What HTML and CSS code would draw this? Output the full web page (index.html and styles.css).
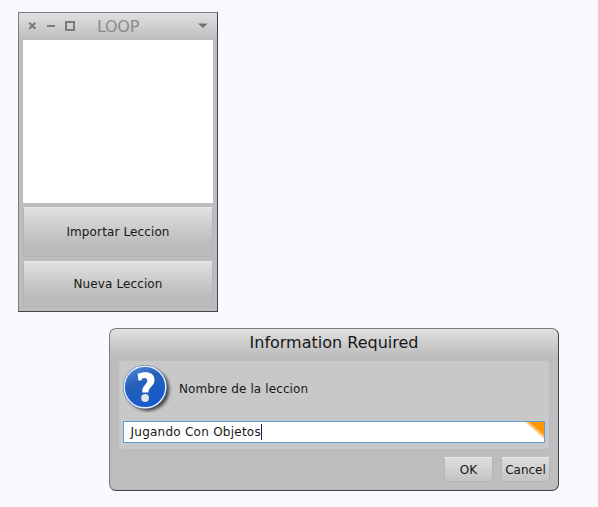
FILE: index.html
```html
<!DOCTYPE html>
<html lang="es">
<head>
<meta charset="utf-8">
<title>LOOP</title>
<link rel="stylesheet" href="styles.css">
</head>
<body>
<main class="desktop">
  <section class="window">
    <header class="titlebar">
      <svg class="controls" width="48" height="12" viewBox="0 0 48 12" fill="none" stroke="#7b7b7b" stroke-width="2">
        <path d="M1.3 2.7l6 6M7.3 2.7l-6 6M19 6h8"/>
        <rect x="38" y="2" width="8" height="8"/>
      </svg>
      <h1 class="window-title">LOOP</h1>
      <svg class="menu-arrow" width="10" height="6" viewBox="0 0 10 6"><path d="M0 .5h9.5L5 5z" fill="#707070"/></svg>
    </header>
    <div class="lesson-list"></div>
    <button class="button import">Importar Leccion</button>
    <button class="button create">Nueva Leccion</button>
  </section>

  <section class="dialog">
    <h2 class="dialog-title">Information Required</h2>
    <div class="panel">
      <div class="prompt">
        <svg class="question" width="54" height="50" viewBox="0 0 54 50">
          <defs>
            <linearGradient id="blue" x1="0" y1="0" x2="0.5" y2="1">
              <stop offset="0" stop-color="#5d92dc"/>
              <stop offset=".45" stop-color="#2560b8"/>
              <stop offset="1" stop-color="#1658cc"/>
            </linearGradient>
            <filter id="soft" x="-20%" y="-20%" width="150%" height="150%"><feGaussianBlur stdDeviation="1.5"/></filter>
          </defs>
          <circle cx="29" cy="26.5" r="21.5" fill="#222" opacity=".75" filter="url(#soft)"/>
          <circle cx="26" cy="24" r="22" fill="#3a6bb4"/>
          <circle cx="26" cy="24" r="20.8" fill="url(#blue)" stroke="#e7effa" stroke-width="1.4"/>
          <path d="M18.6 10.8C26 7.6 35.8 8.8 35.5 17C35.3 23.6 29.4 23.8 29.4 29.6H23.3C22.7 22.5 28.3 21.5 28.3 17.5C28.2 14.6 25 14.4 22.8 15.7L22.6 17.6H19.4Z" fill="#fff"/>
          <circle cx="26.1" cy="35" r="3.9" fill="#dde3e8"/>
        </svg>
        <span class="label">Nombre de la leccion</span>
      </div>
      <div class="field">
        <span class="value">Jugando Con Objetos</span><span class="caret"></span>
        <svg class="corner" width="19" height="17" viewBox="0 0 19 17">
          <defs><linearGradient id="orange" gradientUnits="userSpaceOnUse" x1="8.5" y1="9.5" x2="12" y2="5.5"><stop offset="0" stop-color="#ff9800" stop-opacity="0"/><stop offset="1" stop-color="#ff9500"/></linearGradient></defs>
          <path d="M0 0h19v17z" fill="url(#orange)"/>
        </svg>
      </div>
    </div>
    <div class="actions">
      <button class="button small">OK</button>
      <button class="button small">Cancel</button>
    </div>
  </section>
</main>
</body>
</html>
```
FILE: styles.css
```css
* { box-sizing: border-box; }
body {
  margin: 0;
  background: #f9faff;
  color: #171717;
  font: 12px/16px "DejaVu Sans", sans-serif;
}
.desktop {
  height: 507px;
  padding: 12px 39px 0 18px;
  display: flex;
  flex-direction: column;
  gap: 16px;
}
.window {
  width: 200px;
  height: 300px;
  padding: 0 4px;
  display: flex;
  flex-direction: column;
  background: linear-gradient(#e0e0e0, #bdbdbd 27px);
  border: 1px solid #7c7c80;
  border-right-color: #434347;
  border-bottom-color: #434347;
}
.titlebar {
  height: 27px;
  display: flex;
  align-items: center;
  padding: 0 5px;
}
.controls { margin-top: -1px; }
.window-title {
  margin: 0 auto 0 21px;
  font-size: 16px;
  line-height: 26px;
  font-weight: 400;
  letter-spacing: -0.3px;
  color: #8b8b8b;
}
.menu-arrow { margin-top: -1px; }
.lesson-list {
  height: 163px;
  background: #fff;
}
.button {
  border: 1px solid #b4b4b4;
  border-top-color: #e8e8e8;
  margin: 0;
  padding: 0;
  color: #171717;
  font: inherit;
  letter-spacing: 0.12px;
  background: linear-gradient(#e0e0e0, #bcbcbc 75%);
}
.import { margin-top: 4px; height: 50px; }
.create { margin-top: 4px; height: 46px; }
.dialog {
  width: 450px;
  height: 163px;
  margin-left: 91px;
  padding: 0 9px;
  border: 1px solid #7c7c80;
  border-right-color: #434347;
  border-bottom-color: #434347;
  border-radius: 7px;
  background: linear-gradient(#e0e0e0, #bdbdbd 27px);
}
.dialog-title {
  margin: 0;
  height: 32px;
  font-size: 16px;
  line-height: 27px;
  font-weight: 400;
  text-align: center;
}
.panel {
  height: 88px;
  padding: 0 4px;
  border-radius: 3px;
  background: #c8c8c8;
}
.prompt {
  height: 60px;
  display: flex;
}
.question { margin: 2px 0 0 -4px; }
.label {
  margin: 20px 0 0 6px;
  letter-spacing: 0.11px;
}
.field {
  height: 22px;
  position: relative;
  display: flex;
  align-items: center;
  padding-left: 6.5px;
  border: 1px solid #6f9cc4;
  box-shadow: 0 0 0 1px #bccbd5;
  background: #fff;
}
.value { letter-spacing: 0.25px; }
.caret {
  width: 1px;
  height: 16px;
  background: #20204a;
}
.corner {
  position: absolute;
  top: 0;
  right: 0;
}
.actions {
  display: flex;
  justify-content: flex-end;
  gap: 8px;
  margin: 8px -1px 0 0;
}
.small {
  width: 49px;
  height: 25px;
  letter-spacing: 0;
  background: linear-gradient(#dedede, #c3c3c3);
}
```
